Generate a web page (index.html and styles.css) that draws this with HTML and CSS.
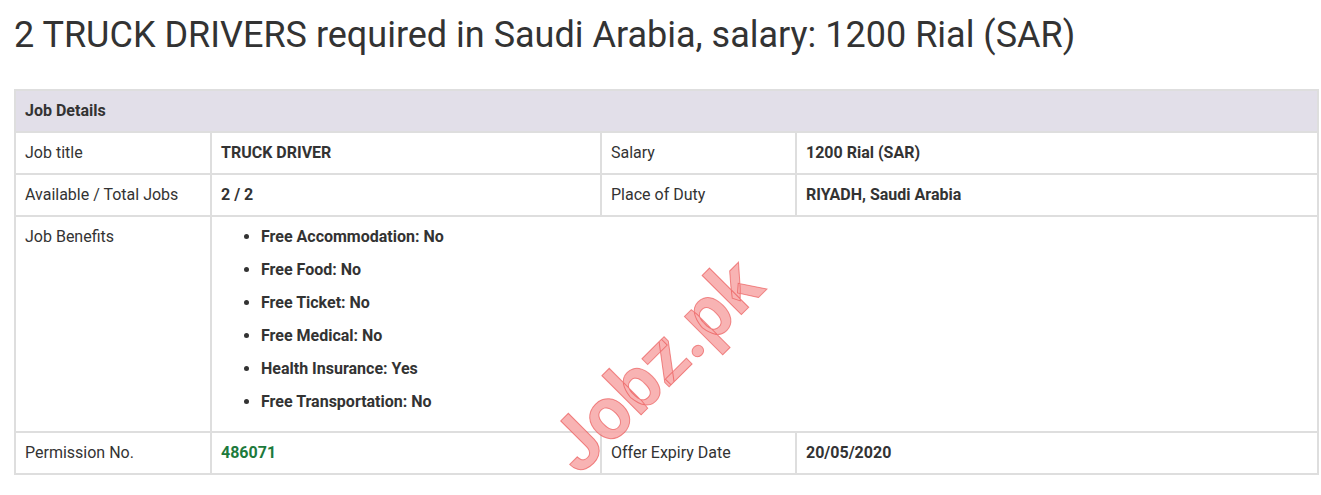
FILE: index.html
```html
<!DOCTYPE html>
<html>
<head>
<meta charset="utf-8">
<link rel="stylesheet" href="styles.css">
</head>
<body>
<div class="page">
  <h1 class="title">2 TRUCK DRIVERS required in Saudi Arabia, salary: 1200 Rial (SAR)</h1>
  <div class="table-wrap">
    <table class="details">
      <colgroup>
        <col class="c1"><col class="c2"><col class="c3"><col class="c4">
      </colgroup>
      <thead>
        <tr><th colspan="4">Job Details</th></tr>
      </thead>
      <tbody>
        <tr>
          <td>Job title</td><td class="val">TRUCK DRIVER</td>
          <td>Salary</td><td class="val">1200 Rial (SAR)</td>
        </tr>
        <tr>
          <td>Available / Total Jobs</td><td class="val">2 / 2</td>
          <td>Place of Duty</td><td class="val">RIYADH, Saudi Arabia</td>
        </tr>
        <tr>
          <td>Job Benefits</td>
          <td colspan="3" class="val">
            <ul class="benefits">
              <li>Free Accommodation: No</li>
              <li>Free Food: No</li>
              <li>Free Ticket: No</li>
              <li>Free Medical: No</li>
              <li>Health Insurance: Yes</li>
              <li>Free Transportation: No</li>
            </ul>
          </td>
        </tr>
        <tr>
          <td>Permission No.</td><td class="val green">486071</td>
          <td>Offer Expiry Date</td><td class="val">20/05/2020</td>
        </tr>
      </tbody>
    </table>
    <div class="watermark">Jobz.pk</div>
  </div>
</div>
</body>
</html>
```
FILE: styles.css
```css
html, body {
  margin: 0;
  padding: 0;
  background: #fff;
}
body {
  font-family: Roboto, "Liberation Sans", sans-serif;
  color: #333;
}
.page {
  padding: 0 2px 0 14px;
}
.title {
  font-family: Roboto, "Liberation Sans", sans-serif;
  font-weight: 400;
  font-size: 36px;
  line-height: 42px;
  margin: 14px 0 0 0;
  color: #333;
}
.table-wrap {
  position: relative;
  margin-top: 33px;
}
.details {
  width: 100%;
  border-collapse: collapse;
  table-layout: fixed;
  font-size: 16px;
  line-height: 24px;
  border: 2px solid #dedede;
}
.c1 { width: 196px; }
.c2 { width: 390px; }
.c3 { width: 195px; }
.details th {
  background: #e2dfe9;
  text-align: left;
  font-weight: 700;
  padding: 8px 9px;
  border: 2px solid #dedede;
}
.details td {
  border: 2px solid #dedede;
  padding: 8px 9px;
  vertical-align: top;
}
.val {
  font-weight: 700;
}
.green {
  color: #1d7a3c;
}
.benefits {
  margin: 0;
  padding: 0 0 0 40px;
}
.benefits li {
  margin-bottom: 9px;
}
.watermark {
  position: absolute;
  left: 574px;
  top: 322px;
  font-family: Roboto, "Liberation Sans", sans-serif;
  font-weight: 700;
  font-size: 74px;
  line-height: 1;
  color: rgba(246, 160, 160, 0.8);
  -webkit-text-stroke: 1px rgba(232, 60, 60, 0.55);
  transform: rotate(-45deg);
  transform-origin: left bottom;
  pointer-events: none;
}
```
